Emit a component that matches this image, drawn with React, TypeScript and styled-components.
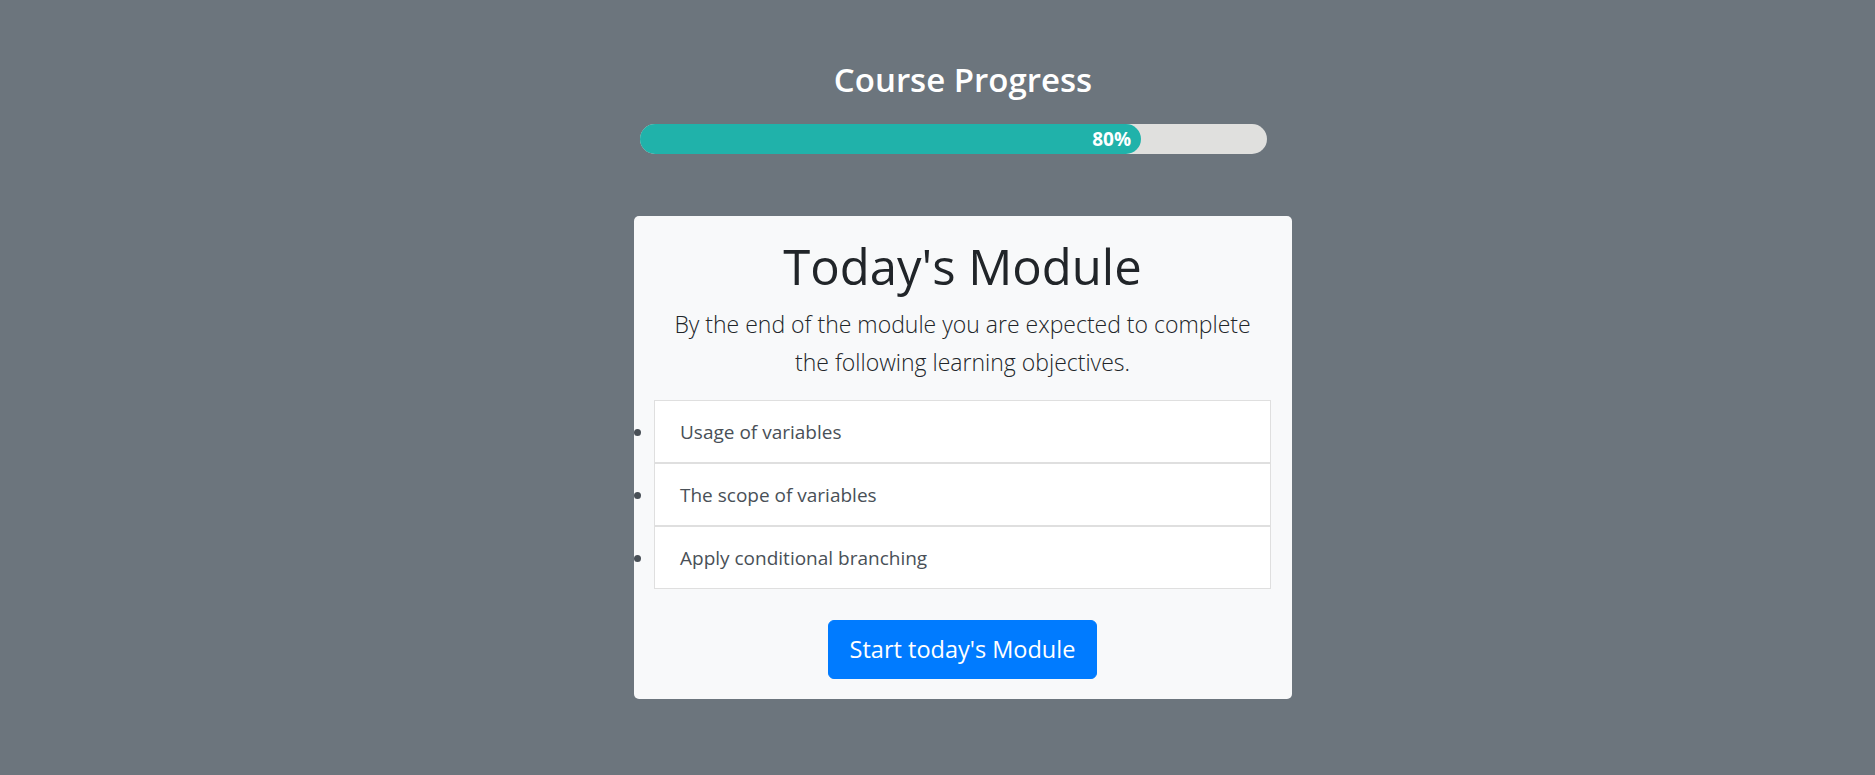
import styled, { createGlobalStyle } from "styled-components"

const GlobalStyle = createGlobalStyle`
  html, body {
    margin: 0;
    padding: 0;
  }

  body {
    background: #6c757d;
    font-family: "Open Sans", "Noto Sans", sans-serif;
    color: #212529;
  }
`

const objectives = [
  "Usage of variables",
  "The scope of variables",
  "Apply conditional branching",
]

const progress = 80

export default function App() {
  return (
    <>
      <GlobalStyle />
      <Page>
        <Column>
          <ProgressTitle>Course Progress</ProgressTitle>
          <ProgressTrack>
            <ProgressFill style={{ width: `${progress}%` }}>
              <ProgressLabel>{progress}%</ProgressLabel>
            </ProgressFill>
          </ProgressTrack>

          <ModuleCard>
            <ModuleTitle>Today's Module</ModuleTitle>
            <Lead>
              By the end of the module you are expected to complete the
              following learning objectives.
            </Lead>
            <ObjectiveList>
              {objectives.map((item) => (
                <ObjectiveItem key={item}>{item}</ObjectiveItem>
              ))}
            </ObjectiveList>
            <StartButton type="button">Start today's Module</StartButton>
          </ModuleCard>
        </Column>
      </Page>
    </>
  )
}

const Page = styled.main`
  min-height: 100vh;
  box-sizing: border-box;
  padding: 59px 0 0 51px;
`

const Column = styled.div`
  display: flex;
  flex-direction: column;
  align-items: center;
  width: 658px;
  margin: 0 auto;
`

const ProgressTitle = styled.h2`
  margin: 0;

  color: #fff;
  font-size: 33px;
  font-weight: 600;
  line-height: 41px;
`

const ProgressTrack = styled.div`
  width: 627px;
  height: 30px;
  margin: 24px 20px 0 0;

  border-radius: 50px;
  background: #e0e0de;
`

const ProgressFill = styled.div`
  display: flex;
  align-items: center;
  justify-content: flex-end;

  height: 100%;
  box-sizing: border-box;
  padding-right: 10px;

  border-radius: inherit;
  background: #20b2aa;
`

const ProgressLabel = styled.span`
  color: #fff;
  font-size: 19px;
  font-weight: 700;
`

const ModuleCard = styled.section`
  display: flex;
  flex-direction: column;
  align-items: center;

  width: 100%;
  box-sizing: border-box;
  margin-top: 62px;
  padding: 20px 21px 20px 20px;

  border-radius: 5px;
  background: #f8f9fa;
`

const ModuleTitle = styled.h1`
  margin: 0 0 10px;

  font-size: 49px;
  font-weight: 400;
  line-height: 60px;
`

const Lead = styled.p`
  margin: 0 0 19px;
  padding: 0 10px;

  font-size: 23px;
  font-weight: 300;
  line-height: 37.5px;
  text-align: center;
`

const ObjectiveList = styled.ul`
  align-self: stretch;

  margin: 0;
  padding: 0;

  color: #495057;
`

const ObjectiveItem = styled.li`
  padding: 15.5px 25px;

  border: 1px solid #dfdfdf;
  background: #fff;

  font-size: 19px;
  line-height: 30px;
`

const StartButton = styled.button`
  margin-top: 31px;
  padding: 9.5px 21px;

  border: 1px solid #007bff;
  border-radius: 6px;
  background: #007bff;

  color: #fff;
  font-family: inherit;
  font-size: 23.5px;
  line-height: 37.5px;
  cursor: pointer;
`
